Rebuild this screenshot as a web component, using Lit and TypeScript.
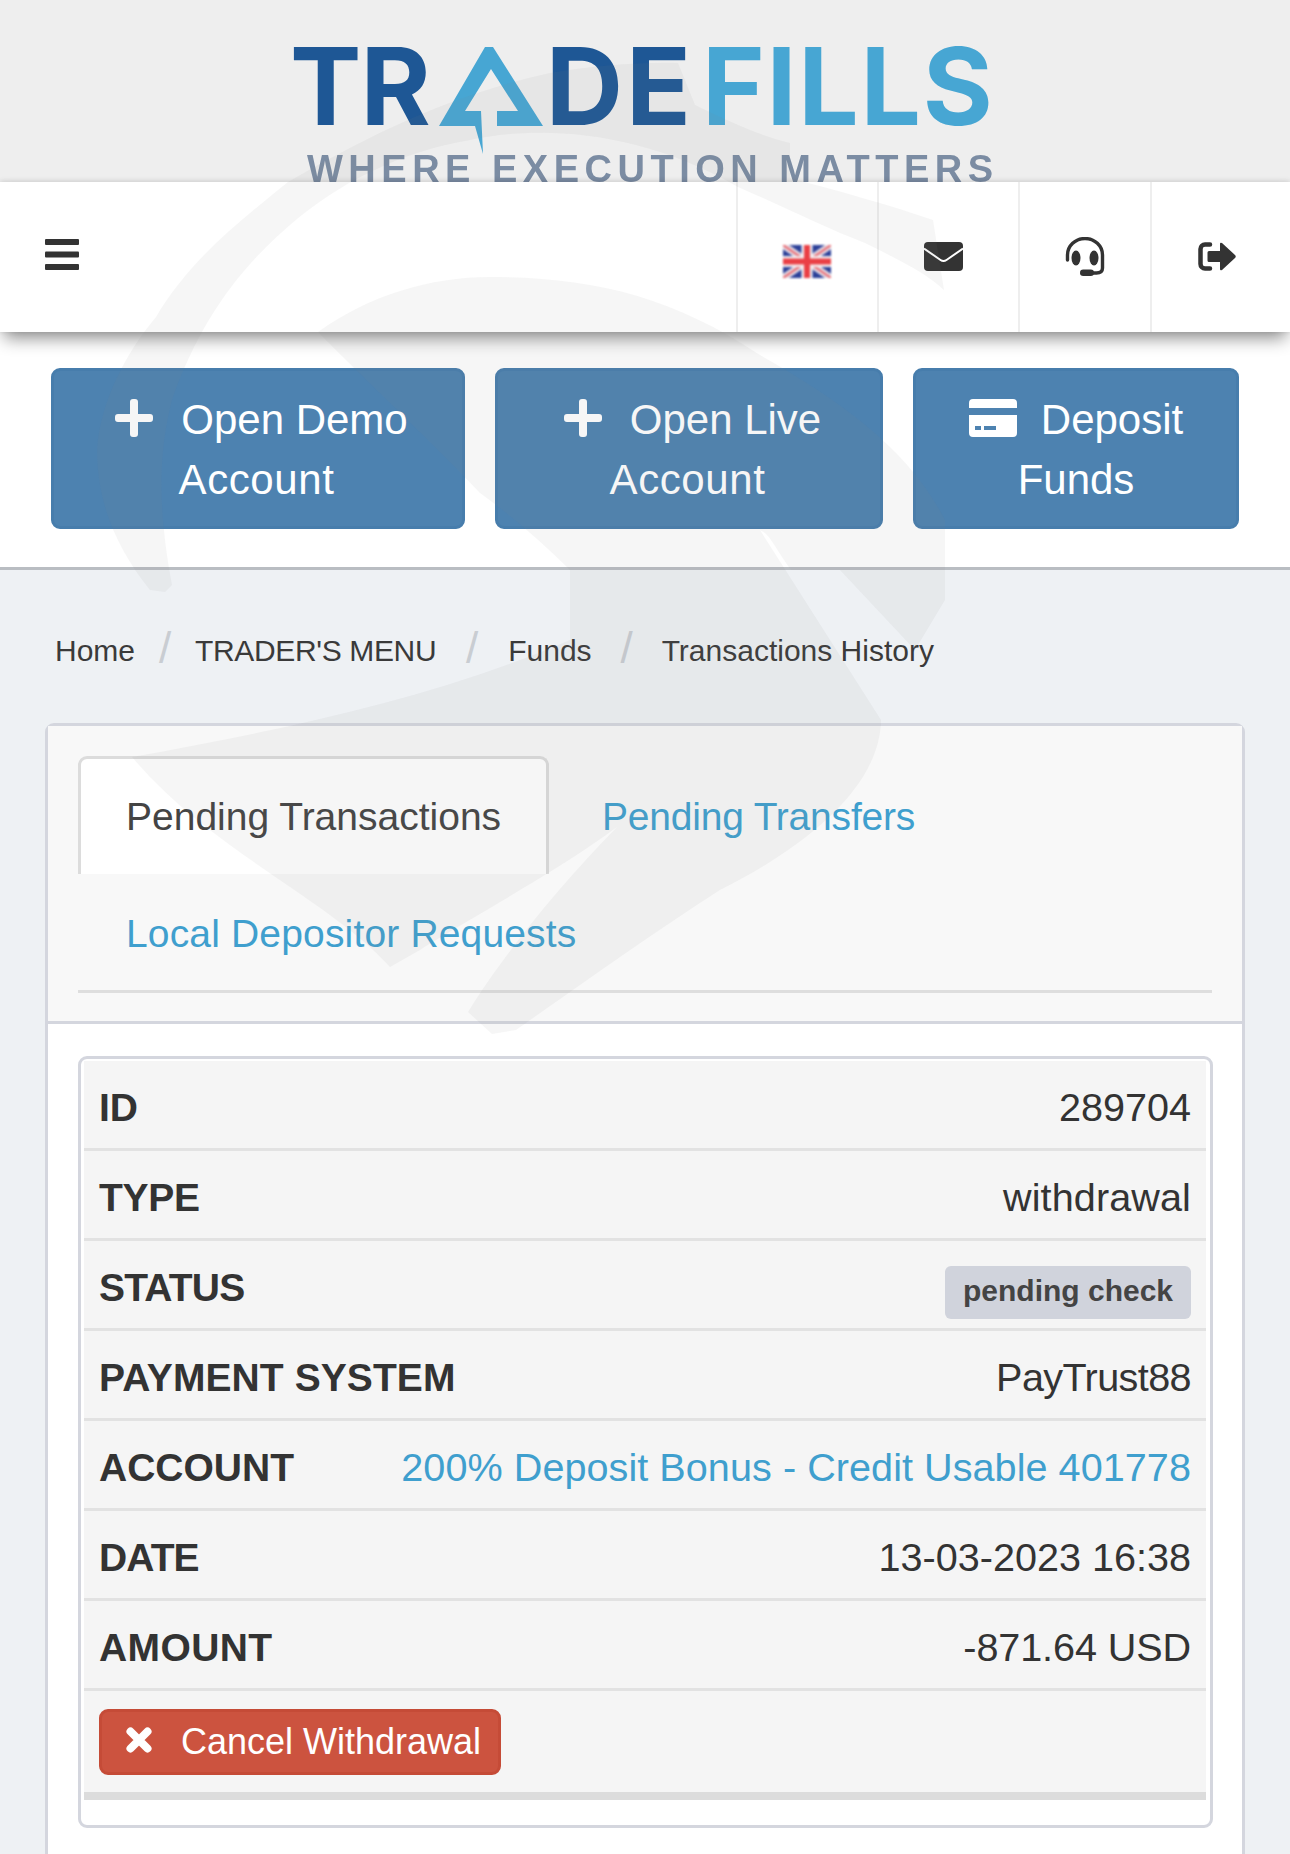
import { LitElement, html, css, svg } from "lit";
import { customElement } from "lit/decorators.js";

/* label, value, label tracking, value tracking (px): Helvetica-vs-Liberation kerning */
const rows: [string, string, number, number][] = [
  ["ID", "289704", 0, 0],
  ["TYPE", "withdrawal", -0.3, 0.1],
  ["STATUS", "badge", -0.8, 0],
  ["PAYMENT SYSTEM", "PayTrust88", 0.08, -0.6],
  ["ACCOUNT", "link", 0, 0.05],
  ["DATE", "13-03-2023 16:38", -0.9, 0],
  ["AMOUNT", "-871.64 USD", 0.4, -0.1],
];

const plus = html`<svg class="ico" width="38" height="38" viewBox="0 0 38 38"><path d="M15 3a3 3 0 0 1 3-3h2a3 3 0 0 1 3 3v12h12a3 3 0 0 1 3 3v2a3 3 0 0 1-3 3H23v12a3 3 0 0 1-3 3h-2a3 3 0 0 1-3-3V23H3a3 3 0 0 1-3-3v-2a3 3 0 0 1 3-3h12z" fill="#fff"/></svg>`;

const card = html`<svg class="ico card" width="48" height="38" viewBox="0 0 48 38"><path d="M4 0h40a4 4 0 0 1 4 4v5H0V4a4 4 0 0 1 4-4zM0 16h48v18a4 4 0 0 1-4 4H4a4 4 0 0 1-4-4zM6 27v4h6v-4zm9 0v4h12v-4z" fill="#fff" fill-rule="evenodd"/></svg>`;

const watermark = svg`<path fill="rgb(136,136,136)" fill-opacity=".075" d="
M150 590 C118 550 97 505 97 450 C100 400 128 350 156 317 C190 260 235 225 288 182 C370 135 450 95 550 73 C590 66 640 62 678 63 L695 105 C730 122 760 136 790 143 L790 178 C835 190 890 205 933 220 L944 290 C925 272 895 258 865 243 C825 228 780 205 738 187 C640 130 540 125 470 140 C400 152 340 182 290 225 C240 268 200 320 172 400 C158 455 158 510 172 585 L165 592 Z
M318 332 C370 295 430 277 490 277 C590 277 670 295 760 355 C840 400 910 450 945 520 L945 600 L915 650 L840 570 L791 570 C770 540 770 535 760 530 L881 720 C880 790 800 850 720 890 C650 935 580 985 516 1030 L492 1034 L468 1012 C500 960 555 890 617 827 C560 870 450 930 420 950 L390 967 C330 900 210 850 132 757 C280 730 430 700 570 640 L570 570 C540 540 510 515 480 493 C430 440 370 385 318 332 Z"/>`;

@customElement("app-root")
export class AppRoot extends LitElement {
  static styles = css`
    :host {
      display: block;
      position: relative;
      height: 1854px;
      overflow: hidden;
      background: #eef1f4;
      font-family: "Liberation Sans", Arial, sans-serif;
      color: #333;
    }
    .mark { position: absolute; left: 0; top: 0; z-index: 5; pointer-events: none; }
    header {
      height: 182px;
      background: #eeeeee;
      overflow: hidden;
      box-sizing: border-box;
      padding: 47px 0 0 290px;
      filter: blur(0.5px);
    }
    .logo { display: flex; font-family: Inter, sans-serif; font-weight: 700; font-size: 107px; line-height: 79px; height: 79px; }
    .dark { color: #1e5795; }
    .light { color: #47a6d3; }
    .logo span { display: block; }
    .logo span.tr { letter-spacing: -1px; }
    .logo span.de { letter-spacing: 3px; }
    .logo span.light { letter-spacing: 1.75px; margin-left: 8px; }
    .logo svg { margin: 0 3px 0 9px; flex: none; }
    .tag {
      margin: 30px 0 0 17px;
      font-weight: 700;
      font-size: 38px;
      line-height: 26px;
      letter-spacing: 5.5px;
      color: #7b8ca3;
      white-space: nowrap;
    }
    nav {
      position: relative;
      z-index: 2;
      height: 150px;
      background: #fff;
      display: flex;
      align-items: stretch;
      box-shadow: 0 10px 16px -4px rgba(0, 0, 0, 0.45), 0 -1px 5px rgba(0, 0, 0, 0.12);
    }
    .burger { flex: 1; padding: 57px 0 0 45px; }
    .cell {
      border-left: 2px solid #eee;
      box-sizing: border-box;
      display: flex;
      justify-content: center;
      align-items: center;
    }
    .c1 { width: 141px; padding-top: 8px; padding-right: 2px; }
    .c2 { width: 141px; padding-right: 11px; padding-bottom: 1px; }
    .c3 { width: 132px; padding-right: 1px; padding-bottom: 1px; }
    .c4 { width: 140px; padding-right: 9px; padding-bottom: 1px; }
    .flag { filter: blur(0.8px); }
    .actions {
      background: #fff;
      height: 238px;
      box-sizing: border-box;
      border-bottom: 3px solid #b9bdc2;
      padding: 36px 0 0 51px;
      display: flex;
      gap: 30px;
      align-items: flex-start;
    }
    .btn {
      box-sizing: border-box;
      height: 161px;
      background: #4d82b0;
      border: 3px solid #477dac;
      border-radius: 9px;
      color: #fff;
      font-size: 42px;
      line-height: 60px;
      padding: 19px 0 0;
      text-align: center;
      white-space: nowrap;
    }
    .b1 { width: 414px; padding-right: 3px; }
    .b2 { width: 388px; padding-right: 3px; }
    .b3 { width: 326px; }
    .l1 { margin-left: 10px; }
    .b3 .l1 { margin-left: 0; }
    .acct { letter-spacing: 0.6px; }
    .ico { vertical-align: -3px; margin-right: 28px; }
    .ico.card { margin-right: 24px; }
    .crumbs {
      height: 153px;
      box-sizing: border-box;
      padding: 60px 0 0 55px;
      display: flex;
      font-size: 30px;
      line-height: 42px;
      color: #3a3a3a;
      white-space: nowrap;
    }
    .tight { letter-spacing: -0.35px; }
    .sep {
      width: 72px;
      text-align: center;
      color: #c9cdd2;
      font-size: 44px;
      line-height: 36px;
    }
    .sep.first { width: 60px; }
    .sep.short { width: 70px; }
    .panel {
      margin: 0 45px;
      border: 3px solid #d4d6de;
      border-radius: 9px 9px 0 0;
      background: #fff;
      height: 1200px;
    }
    .head {
      box-sizing: border-box;
      height: 298px;
      background: #f8f8f8;
      border-bottom: 3px solid #d4d6de;
      padding: 30px 30px 0;
    }
    .tabs { border-bottom: 3px solid #dedede; height: 237px; box-sizing: border-box; }
    .tabrow { display: flex; height: 118px; font-size: 39px; line-height: 118px; color: #3f9fce; white-space: nowrap; }
    .tabrow span { position: relative; top: 2px; }
    .tab { padding: 0 48px; }
    .tab.on {
      box-sizing: border-box;
      width: 471px;
      padding: 0 45px;
      margin-right: 5px;
      color: #444;
      background: #fff;
      border: 3px solid #dcdcdc;
      border-bottom: 0;
      border-radius: 9px 9px 0 0;
    }
    .tab.on span { top: -1px; }
    .tabrow.two { height: 116px; }
    .tabrow.two span { top: 1px; letter-spacing: 0.16px; }
    .tf { letter-spacing: -0.2px; }
    .body { padding: 32px 29px 0 30px; }
    .tbl {
      box-sizing: border-box;
      height: 772px;
      border: 3px solid #d4d6de;
      border-radius: 9px;
      padding: 2px 4px 0 3px;
      background: #fff;
    }
    .row {
      box-sizing: border-box;
      height: 90px;
      background: #f5f5f5;
      border-bottom: 3px solid #e2e2e2;
      padding: 0 15px;
      display: flex;
      justify-content: space-between;
      align-items: center;
      font-size: 39.6px;
      white-space: nowrap;
    }
    .row b, .row > span { position: relative; top: 3px; }
    .row b { font-size: 39px; font-weight: 700; color: #333; }
    .row a { color: #3f9fce; }
    .badge {
      box-sizing: border-box;
      position: relative;
      top: 8px;
      width: 246px;
      height: 53px;
      background: #d0d3dc;
      color: #444;
      border-radius: 6px;
      font-size: 30px;
      font-weight: 700;
      line-height: 49px;
      text-align: center;
    }
    .last {
      box-sizing: border-box;
      height: 109px;
      background: #f5f5f5;
      border-bottom: 8px solid #dcdcdc;
      padding: 18px 15px 0;
    }
    .cancel {
      box-sizing: border-box;
      width: 402px;
      height: 66px;
      background: #cc533f;
      border: 3px solid #c54b37;
      border-radius: 9px;
      color: #fff;
      font-size: 36px;
      line-height: 60px;
      padding-left: 24px;
      white-space: nowrap;
    }
    .cancel svg { vertical-align: 1px; margin-right: 29px; }
  `;

  private cellValue(v: string, track: number) {
    if (v === "badge") return html`<div class="badge">pending check</div>`;
    const inner = v === "link" ? html`<a>200% Deposit Bonus - Credit Usable 401778</a>` : v;
    return html`<span style="letter-spacing:${track}px">${inner}</span>`;
  }

  render() {
    return html`
      <svg class="mark" width="1290" height="1100" viewBox="0 0 1290 1100">${watermark}</svg>
      <header>
        <div class="logo">
          <span class="dark tr">TR</span>
          <svg width="104" height="107" viewBox="0 0 104 107"><path fill="#47a6d3" d="M46 0h8l50 79H58V64h21L52 22 26 64h16l2 43-8-28H0z"/></svg>
          <span class="dark de">DE</span><span class="light">FILLS</span>
        </div>
        <div class="tag">WHERE EXECUTION MATTERS</div>
      </header>
      <nav>
        <div class="burger">
          <svg width="34" height="31" viewBox="0 0 34 31" style="display:block"><g fill="#333"><rect width="34" height="6" rx="1"/><rect y="12.5" width="34" height="6" rx="1"/><rect y="25" width="34" height="6" rx="1"/></g></svg>
        </div>
        <div class="cell c1">
          <svg class="flag" width="48" height="33" viewBox="0 0 48 33"><rect width="48" height="33" fill="#2b3f98"/><path d="M0 0l48 33M48 0L0 33" stroke="#e8dfe6" stroke-width="7"/><path d="M0 0l48 33M48 0L0 33" stroke="#e8646c" stroke-width="2"/><path d="M24 0v33M0 16.500h48" stroke="#f4f0f2" stroke-width="11"/><path d="M24 0v33M0 16.500h48" stroke="#ea3f45" stroke-width="6"/></svg>
        </div>
        <div class="cell c2">
          <svg width="39" height="29" viewBox="0 0 39 29"><rect width="39" height="29" rx="4" fill="#333"/><path d="M0 6.500l16.500 11.500q3 2 6 0L39 6.500" fill="none" stroke="#fff" stroke-width="2"/></svg>
        </div>
        <div class="cell c3">
          <svg width="40" height="39" viewBox="0 0 40 39"><path d="M2.500 23v-5a17 16 0 0 1 35 0v13q0 5-6 5h-7" fill="none" stroke="#333" stroke-width="3.400" stroke-linecap="round"/><ellipse cx="11" cy="21" rx="4.500" ry="7.500" fill="#333"/><ellipse cx="29" cy="21" rx="4.500" ry="7.500" fill="#333"/><rect x="15" y="32.500" width="14" height="6.500" rx="3.200" fill="#333"/></svg>
        </div>
        <div class="cell c4">
          <svg width="38" height="29" viewBox="0 0 38 29"><path d="M12 2.500H7a4.500 4.500 0 0 0-4.500 4.500v15A4.500 4.500 0 0 0 7 26.500h5" fill="none" stroke="#333" stroke-width="4.500" stroke-linecap="round"/><path d="M11 9h11V2q0-2 2-1l13 12q1.500 1.500 0 3L24 28q-2 1-2-1v-7H11q-1.500 0-1.500-1.500v-8Q9.500 9 11 9z" fill="#333"/></svg>
        </div>
      </nav>
      <section class="actions">
        <div class="btn b1"><div class="l1">${plus}Open Demo</div><div class="acct">Account</div></div>
        <div class="btn b2"><div class="l1">${plus}Open Live</div><div class="acct">Account</div></div>
        <div class="btn b3"><div class="l1">${card}Deposit</div><div>Funds</div></div>
      </section>
      <div class="crumbs">
        <span>Home</span><span class="sep first">/</span>
        <span class="tight">TRADER'S MENU</span><span class="sep">/</span>
        <span>Funds</span><span class="sep short">/</span>
        <span>Transactions History</span>
      </div>
      <div class="panel">
        <div class="head">
          <div class="tabs">
            <div class="tabrow">
              <div class="tab on"><span>Pending Transactions</span></div>
              <div class="tab"><span class="tf">Pending Transfers</span></div>
            </div>
            <div class="tabrow two"><div class="tab"><span>Local Depositor Requests</span></div></div>
          </div>
        </div>
        <div class="body">
          <div class="tbl">
            ${rows.map(([k, v, kt, vt]) => html`<div class="row"><b style="letter-spacing:${kt}px">${k}</b>${this.cellValue(v, vt)}</div>`)}
            <div class="last">
              <div class="cancel"><svg width="26" height="26" viewBox="0 0 26 26"><path d="M4.500 4.500l17 17M21.500 4.500l-17 17" stroke="#fff" stroke-width="8" stroke-linecap="round"/></svg>Cancel Withdrawal</div>
            </div>
          </div>
        </div>
      </div>
    `;
  }
}
